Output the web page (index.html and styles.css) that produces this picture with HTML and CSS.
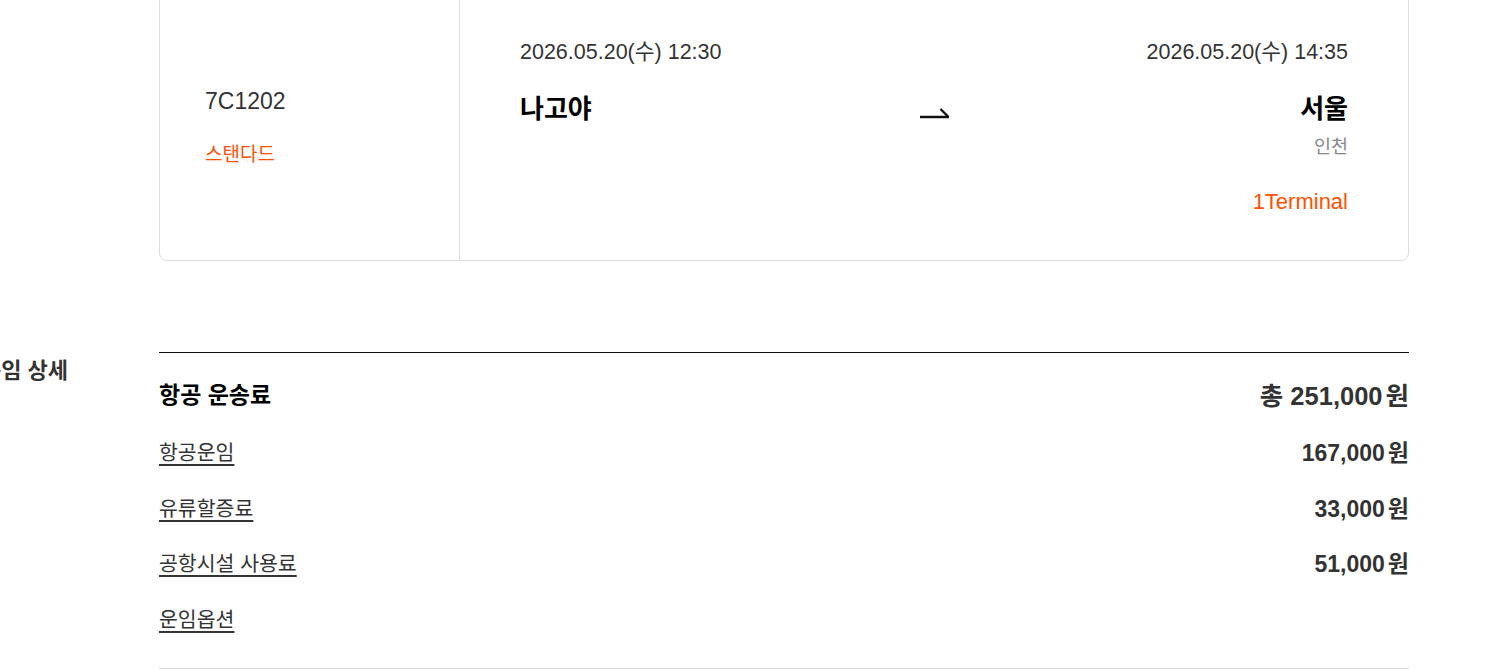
FILE: index.html
```html
<!DOCTYPE html>
<html lang="ko">
<head>
  <meta charset="UTF-8">
  <title>운임 상세</title>
  <link rel="stylesheet" href="styles.css">
</head>
<body>

<div class="page">
  <div class="flight-card">
    <div class="flight-info">
      <div class="flight-no">7C1202</div>
      <div class="fare-class">스탠다드</div>
    </div>
    <div class="route">
      <div class="stop">
        <div class="time">2026.05.20(수) 12:30</div>
        <div class="city">나고야</div>
      </div>
      <div class="arrow">
        <svg width="32" height="14" viewBox="0 0 32 14">
          <path d="M1 11 H30 M29.5 11 L21.5 3" fill="none" stroke="#111" stroke-width="2.4"/>
        </svg>
      </div>
      <div class="stop stop-end">
        <div class="time">2026.05.20(수) 14:35</div>
        <div class="city">서울</div>
        <div class="airport">인천</div>
        <div class="terminal">1Terminal</div>
      </div>
    </div>
  </div>

  <div class="fare">
    <h3 class="fare-title">운임 상세</h3>
    <div class="fare-body">
      <div class="fare-row fare-total">
        <span>항공 운송료</span>
        <span class="amount">총 251,000<span class="won">원</span></span>
      </div>
      <div class="fare-items">
        <div class="fare-row">
          <a class="fare-link">항공운임</a>
          <span class="amount">167,000<span class="won">원</span></span>
        </div>
        <div class="fare-row">
          <a class="fare-link">유류할증료</a>
          <span class="amount">33,000<span class="won">원</span></span>
        </div>
        <div class="fare-row">
          <a class="fare-link">공항시설 사용료</a>
          <span class="amount">51,000<span class="won">원</span></span>
        </div>
        <div class="fare-row">
          <a class="fare-link">운임옵션</a>
        </div>
      </div>
    </div>
  </div>
</div>

</body>
</html>
```

FILE: styles.css
```css
body {
  margin: 0;
  font-family: "Liberation Sans", "Noto Sans CJK KR", sans-serif;
  color: #333;
  background: #fff;
  overflow: hidden;
}
.page { margin-top: -20px; }

/* flight card */
.flight-card {
  display: flex;
  margin-left: 159px;
  width: 1250px;
  border: 1px solid #ddd;
  border-radius: 8px;
  box-sizing: border-box;
}
.flight-info {
  width: 300px;
  border-right: 1px solid #ddd;
  padding: 105px 0 0 45px;
  box-sizing: border-box;
}
.flight-no { font-size: 23px; line-height: 30px; }
.fare-class { font-size: 19px; line-height: 26px; margin-top: 26px; color: #ff5000; }

.route {
  flex: 1;
  display: grid;
  grid-template-columns: 1fr auto 1fr;
  padding: 56px 60px 44px 60px;
}
.time { font-size: 21.5px; line-height: 30px; color: #333; }
.city { font-size: 26px; line-height: 34px; font-weight: bold; color: #000; margin-top: 25px; }
.stop-end { text-align: right; }
.airport { font-size: 18.5px; line-height: 24px; color: #888; margin-top: 9px; }
.terminal { font-size: 22px; line-height: 28px; color: #ff5000; margin-top: 29px; }
.arrow { padding-top: 69px; padding-left: 2px; }
.arrow svg { display: block; }

/* fare detail */
.fare {
  display: grid;
  grid-template-columns: 178px 1250px;
  margin-left: -19px;
  margin-top: 91px;
}
.fare-title {
  margin: 0;
  padding-top: 5px;
  font-size: 22px;
  line-height: 28px;
  color: #333;
}
.fare-body {
  border-top: 1px solid #111;
  border-bottom: 1px solid #ddd;
  padding: 24px 0 36px;
}
.fare-row {
  display: flex;
  justify-content: space-between;
  align-items: center;
  height: 28px;
}
.fare-total {
  height: 32px;
  font-size: 23px;
  font-weight: bold;
  color: #000;
}
.fare-total .amount { font-size: 25.5px; color: #333; }
.fare-items {
  display: flex;
  flex-direction: column;
  gap: 27.5px;
  margin-top: 28px;
}
.fare-link {
  font-size: 20.5px;
  color: #333;
  text-decoration: underline;
  text-decoration-thickness: 2px;
  text-underline-offset: 4px;
}
.amount { font-size: 23px; font-weight: bold; color: #333; }
.won { margin-left: 3px; }
```
